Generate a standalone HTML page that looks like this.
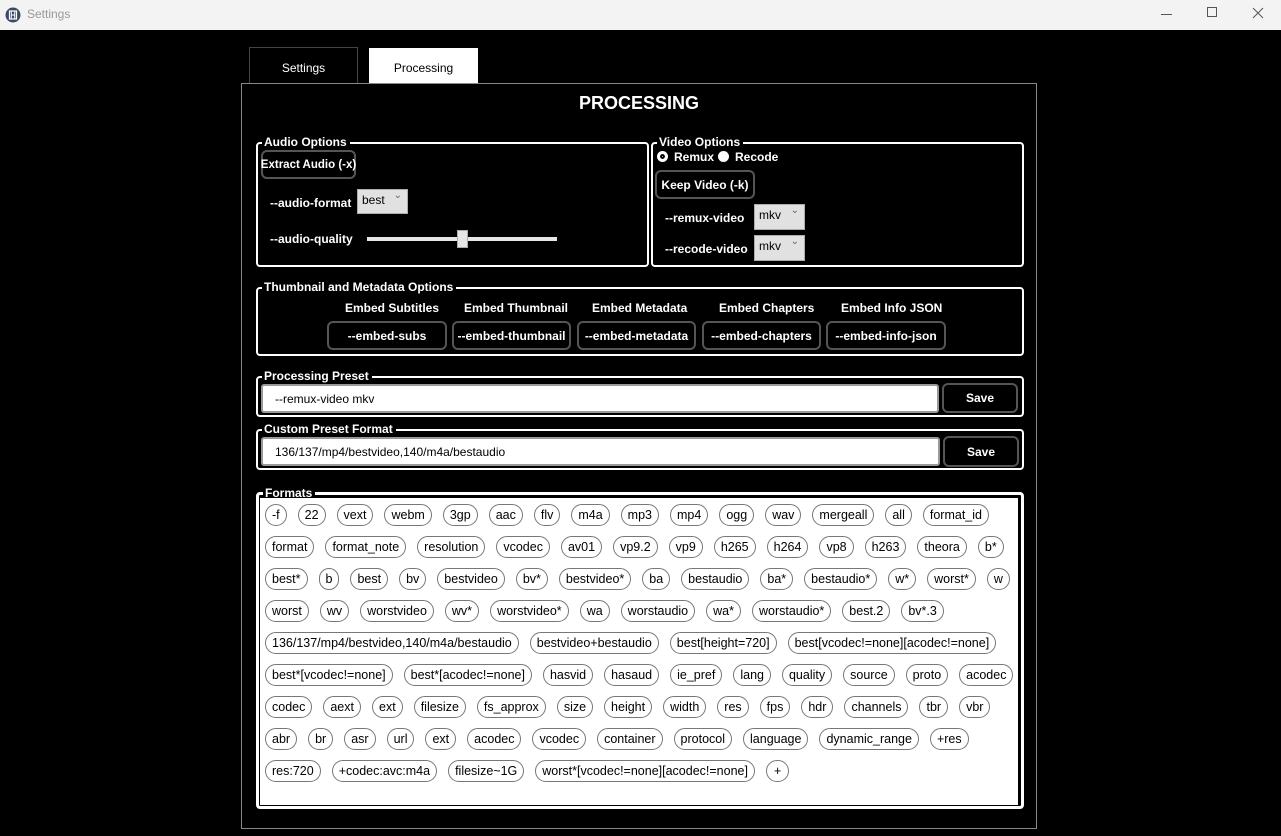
<!DOCTYPE html>
<html><head><meta charset="utf-8"><style>
*{box-sizing:border-box;margin:0;padding:0}
body{width:1281px;height:836px;background:#000;font-family:"Liberation Sans",sans-serif;color:#fff;position:relative;overflow:hidden;font-size:12px}
.a{position:absolute}
.tb{left:0;top:0;width:1281px;height:30px;background:#f3f3f3}
.gb{position:absolute;border:2px solid #fff;border-radius:4px}
.gt{position:absolute;top:-9px;left:4px;background:#000;padding:0 3px 0 2px;font-weight:bold;font-size:12px;line-height:14px}
.btn{position:absolute;border:2px solid #555;border-radius:6px;background:#000;font-weight:bold;font-size:12px;display:flex;align-items:center;justify-content:center;white-space:nowrap}
.sel{position:absolute;background:#e1e1e1;border:1px solid #adadad;color:#000;font-size:12px;padding:3px 0 0 4px}
.sel:after{content:"⌄";position:absolute;right:5px;top:0;font-size:10px;color:#666}
.lbl{position:absolute;font-weight:bold;font-size:12px}
.inp{position:absolute;background:#fff;border:2px solid #999;border-radius:3px;color:#000;font-size:12px;padding:6px 0 0 12px}
.row{position:absolute;left:265px;display:flex;gap:11px}
.p{height:22px;border:1px solid #777;border-radius:11px;color:#000;font-size:12.5px;padding:0 6px;line-height:20px;white-space:nowrap;background:#fff}
</style></head><body>
<div class="a tb">
<svg class="a" style="left:5px;top:7px" width="16" height="16" viewBox="0 0 16 16"><circle cx="8" cy="8" r="7.5" fill="#3d4a66"/><rect x="4.5" y="4" width="7" height="8" fill="none" stroke="#fff" stroke-width="1.2"/><line x1="6.3" y1="4" x2="6.3" y2="12" stroke="#fff"/><line x1="9.7" y1="4" x2="9.7" y2="12" stroke="#fff"/><line x1="6" y1="8" x2="10" y2="8" stroke="#fff"/></svg>
<div class="a" style="left:27px;top:7px;color:#999;font-size:12px">Settings</div>
<div class="a" style="left:1161px;top:14px;width:11px;height:1px;background:#555"></div>
<div class="a" style="left:1207px;top:7px;width:10px;height:10px;border:1px solid #555"></div>
<svg class="a" style="left:1252px;top:7px" width="12" height="12"><path d="M1 1L11 11M11 1L1 11" stroke="#555" stroke-width="1"/></svg>
</div>
<div class="a" style="left:249px;top:47px;width:109px;height:37px;border:1px solid #444;border-bottom:none;text-align:center;line-height:40px">Settings</div>
<div class="a" style="left:369px;top:48px;width:109px;height:36px;background:#fff;color:#000;text-align:center;line-height:40px">Processing</div>
<div class="a" style="left:241px;top:83px;width:796px;height:746px;border:1px solid #888"></div>
<div class="a" style="left:241px;top:93px;width:796px;text-align:center;font-size:18px;font-weight:bold">PROCESSING</div>

<div class="gb" style="left:256px;top:142px;width:393px;height:125px"><div class="gt">Audio Options</div></div>
<div class="btn" style="left:261px;top:150px;width:95px;height:29px;font-size:11.5px">Extract Audio (-x)</div>
<div class="lbl" style="left:270px;top:196px">--audio-format</div>
<div class="sel" style="left:357px;top:189px;width:51px;height:25px">best</div>
<div class="lbl" style="left:270px;top:232px">--audio-quality</div>
<div class="a" style="left:367px;top:237px;width:190px;height:4px;background:#e6e6e6"></div>
<div class="a" style="left:457px;top:230px;width:11px;height:18px;background:#e6e6e6;border:1px solid #aaa"></div>

<div class="gb" style="left:651px;top:142px;width:373px;height:125px"><div class="gt">Video Options</div></div>
<div class="a" style="left:657px;top:151px;width:11px;height:11px;border-radius:50%;background:#fff;border:3px solid #fff;box-shadow:inset 0 0 0 2px #000"></div>
<div class="lbl" style="left:674px;top:150px">Remux</div>
<div class="a" style="left:718px;top:151px;width:11px;height:11px;border-radius:50%;background:#fff"></div>
<div class="lbl" style="left:735px;top:150px">Recode</div>
<div class="btn" style="left:655px;top:170px;width:100px;height:29px">Keep Video (-k)</div>
<div class="lbl" style="left:665px;top:211px">--remux-video</div>
<div class="sel" style="left:754px;top:204px;width:51px;height:26px">mkv</div>
<div class="lbl" style="left:665px;top:242px">--recode-video</div>
<div class="sel" style="left:754px;top:235px;width:51px;height:26px">mkv</div>

<div class="gb" style="left:256px;top:287px;width:768px;height:69px"><div class="gt">Thumbnail and Metadata Options</div></div>
<div class="lbl" style="left:345px;top:301px">Embed Subtitles</div>
<div class="lbl" style="left:464px;top:301px">Embed Thumbnail</div>
<div class="lbl" style="left:592px;top:301px">Embed Metadata</div>
<div class="lbl" style="left:719px;top:301px">Embed Chapters</div>
<div class="lbl" style="left:841px;top:301px">Embed Info JSON</div>
<div class="btn" style="left:327px;top:321px;width:120px;height:29px">--embed-subs</div>
<div class="btn" style="left:452px;top:321px;width:119px;height:29px">--embed-thumbnail</div>
<div class="btn" style="left:577px;top:321px;width:119px;height:29px">--embed-metadata</div>
<div class="btn" style="left:702px;top:321px;width:119px;height:29px">--embed-chapters</div>
<div class="btn" style="left:826px;top:321px;width:120px;height:29px">--embed-info-json</div>

<div class="gb" style="left:256px;top:376px;width:768px;height:41px"><div class="gt">Processing Preset</div></div>
<div class="inp" style="left:261px;top:384px;width:678px;height:29px">--remux-video mkv</div>
<div class="btn" style="left:942px;top:383px;width:76px;height:30px">Save</div>
<div class="gb" style="left:256px;top:429px;width:768px;height:41px"><div class="gt">Custom Preset Format</div></div>
<div class="inp" style="left:261px;top:437px;width:679px;height:29px">136/137/mp4/bestvideo,140/m4a/bestaudio</div>
<div class="btn" style="left:943px;top:436px;width:76px;height:31px">Save</div>

<div class="gb" style="left:256px;top:492px;width:768px;height:317px;border-width:3px"><div class="gt" style="top:-9px">Formats</div></div>
<div class="a" style="left:260px;top:498px;width:758px;height:307px;background:#fff"></div>
<div class="row" style="top:504px"><span class="p">-f</span><span class="p">22</span><span class="p">vext</span><span class="p">webm</span><span class="p">3gp</span><span class="p">aac</span><span class="p">flv</span><span class="p">m4a</span><span class="p">mp3</span><span class="p">mp4</span><span class="p">ogg</span><span class="p">wav</span><span class="p">mergeall</span><span class="p">all</span><span class="p">format_id</span></div>
<div class="row" style="top:536px"><span class="p">format</span><span class="p">format_note</span><span class="p">resolution</span><span class="p">vcodec</span><span class="p">av01</span><span class="p">vp9.2</span><span class="p">vp9</span><span class="p">h265</span><span class="p">h264</span><span class="p">vp8</span><span class="p">h263</span><span class="p">theora</span><span class="p">b*</span></div>
<div class="row" style="top:568px"><span class="p">best*</span><span class="p">b</span><span class="p">best</span><span class="p">bv</span><span class="p">bestvideo</span><span class="p">bv*</span><span class="p">bestvideo*</span><span class="p">ba</span><span class="p">bestaudio</span><span class="p">ba*</span><span class="p">bestaudio*</span><span class="p">w*</span><span class="p">worst*</span><span class="p">w</span></div>
<div class="row" style="top:600px"><span class="p">worst</span><span class="p">wv</span><span class="p">worstvideo</span><span class="p">wv*</span><span class="p">worstvideo*</span><span class="p">wa</span><span class="p">worstaudio</span><span class="p">wa*</span><span class="p">worstaudio*</span><span class="p">best.2</span><span class="p">bv*.3</span></div>
<div class="row" style="top:632px"><span class="p">136/137/mp4/bestvideo,140/m4a/bestaudio</span><span class="p">bestvideo+bestaudio</span><span class="p">best[height=720]</span><span class="p">best[vcodec!=none][acodec!=none]</span></div>
<div class="row" style="top:664px"><span class="p">best*[vcodec!=none]</span><span class="p">best*[acodec!=none]</span><span class="p">hasvid</span><span class="p">hasaud</span><span class="p">ie_pref</span><span class="p">lang</span><span class="p">quality</span><span class="p">source</span><span class="p">proto</span><span class="p">acodec</span></div>
<div class="row" style="top:696px"><span class="p">codec</span><span class="p">aext</span><span class="p">ext</span><span class="p">filesize</span><span class="p">fs_approx</span><span class="p">size</span><span class="p">height</span><span class="p">width</span><span class="p">res</span><span class="p">fps</span><span class="p">hdr</span><span class="p">channels</span><span class="p">tbr</span><span class="p">vbr</span></div>
<div class="row" style="top:728px"><span class="p">abr</span><span class="p">br</span><span class="p">asr</span><span class="p">url</span><span class="p">ext</span><span class="p">acodec</span><span class="p">vcodec</span><span class="p">container</span><span class="p">protocol</span><span class="p">language</span><span class="p">dynamic_range</span><span class="p">+res</span></div>
<div class="row" style="top:760px"><span class="p">res:720</span><span class="p">+codec:avc:m4a</span><span class="p">filesize~1G</span><span class="p">worst*[vcodec!=none][acodec!=none]</span><span class="p" style="padding:0 7px">+</span></div>
</body></html>
